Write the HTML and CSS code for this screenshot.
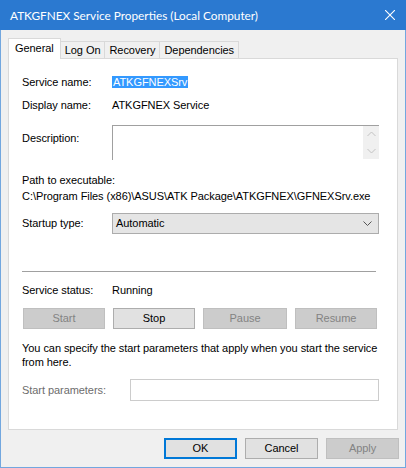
FILE: index.html
```html
<!DOCTYPE html>
<html>
<head>
<meta charset="utf-8">
<title>ATKGFNEX Service Properties</title>
<link rel="stylesheet" href="styles.css">
</head>
<body>
<div class="window">
  <div class="titlebar">
    <span class="title">ATKGFNEX Service Properties (Local Computer)</span>
    <svg class="close" width="10" height="10" viewBox="0 0 10 10"><path d="M0 0L10 10M10 0L0 10" stroke="#fff" stroke-width="1.1" fill="none"/></svg>
  </div>
  <div class="content">
    <div class="tabs">
      <div class="tab active">General</div>
      <div class="tab">Log On</div>
      <div class="tab">Recovery</div>
      <div class="tab">Dependencies</div>
    </div>
    <div class="panel">
      <div class="row r-name"><span class="label">Service name:</span><span class="sel">ATKGFNEXSrv</span></div>
      <div class="row r-display"><span class="label">Display name:</span><span>ATKGFNEX Service</span></div>
      <div class="row r-desc">
        <span class="label desc-label">Description:</span>
        <div class="textbox">
          <div class="scrollbar">
            <svg width="9" height="6" viewBox="0 0 9 6"><polyline points="0.5,5 4.5,1 8.5,5" fill="none" stroke="#c2c2c2" stroke-width="1"/></svg>
            <svg width="9" height="6" viewBox="0 0 9 6"><polyline points="0.5,1 4.5,5 8.5,1" fill="none" stroke="#c2c2c2" stroke-width="1"/></svg>
          </div>
        </div>
      </div>
      <div class="r-pathlabel">Path to executable:</div>
      <div class="r-path">C:\Program Files (x86)\ASUS\ATK Package\ATKGFNEX\GFNEXSrv.exe</div>
      <div class="row r-startup">
        <span class="label">Startup type:</span>
        <div class="combo"><span>Automatic</span>
          <svg width="9" height="5" viewBox="0 0 9 5"><polyline points="0.5,0.5 4.5,4.5 8.5,0.5" fill="none" stroke="#555" stroke-width="1"/></svg>
        </div>
      </div>
      <div class="sep"></div>
      <div class="row r-status"><span class="label">Service status:</span><span>Running</span></div>
      <div class="svc-buttons">
        <div class="btn disabled">Start</div>
        <div class="btn">Stop</div>
        <div class="btn disabled">Pause</div>
        <div class="btn disabled">Resume</div>
      </div>
      <p class="note">You can specify the start parameters that apply when you start the service from here.</p>
      <div class="row r-params">
        <span class="label params-label">Start parameters:</span>
        <div class="param-input"></div>
      </div>
    </div>
    <div class="footer">
      <div class="btn dlg default">OK</div>
      <div class="btn dlg">Cancel</div>
      <div class="btn dlg disabled">Apply</div>
    </div>
  </div>
</div>
</body>
</html>
```

FILE: styles.css
```css
html, body {
  margin: 0;
  padding: 0;
}
body {
  width: 406px;
  height: 468px;
  overflow: hidden;
  background: #f0f0f0;
  font-family: "Liberation Sans", Arial, sans-serif;
  font-size: 11px;
  letter-spacing: -0.06px;
  color: #000;
}
.window {
  box-sizing: border-box;
  width: 406px;
  height: 468px;
  border: 1px solid #72a7df;
  border-top: 0;
  display: flex;
  flex-direction: column;
}
.titlebar {
  height: 30px;
  margin: 0 -1px;
  background: #2b79d0;
  color: #fff;
  display: flex;
  align-items: center;
  padding-left: 10px;
  font-family: Lato, "Noto Sans", sans-serif;
  font-size: 11.8px;
  letter-spacing: 0;
}
.close {
  margin-left: auto;
  margin-right: 11px;
}
.content {
  padding: 8px 7px 0 7px;
}
.tabs {
  display: flex;
  align-items: flex-end;
  height: 20px;
}
.tab {
  box-sizing: border-box;
  height: 17px;
  line-height: 16px;
  padding: 0 4px;
  background: #f0f0f0;
  border-top: 1px solid #d9d9d9;
  border-right: 1px solid #d9d9d9;
}
.tab.active {
  position: relative;
  z-index: 1;
  height: 21px;
  line-height: 18px;
  margin-bottom: -1px;
  background: #fff;
  border-left: 1px solid #d9d9d9;
  padding: 0 6px;
}
.panel {
  box-sizing: border-box;
  height: 372px;
  background: #fff;
  border: 1px solid #d9d9d9;
  padding: 0 13px;
}
.row {
  display: flex;
  line-height: 13px;
}
.label {
  flex: none;
  width: 90px;
}
.r-name {
  margin-top: 17px;
  line-height: 12px;
  height: 12px;
}
.sel {
  background: #3399ff;
  color: #fff;
  padding: 0 1px;
}
.r-display {
  margin-top: 11px;
}
.r-desc {
  margin-top: 13px;
  height: 35px;
}
.desc-label {
  padding-top: 7px;
}
.textbox {
  box-sizing: border-box;
  width: 267px;
  height: 35px;
  border-top: 1px solid #a0a0a0;
  border-left: 1px solid #a0a0a0;
  display: flex;
  justify-content: flex-end;
}
.scrollbar {
  width: 16px;
  height: 33px;
  background: #f0f0f0;
  display: flex;
  flex-direction: column;
  align-items: center;
  justify-content: space-around;
}
.r-pathlabel {
  margin-top: 14px;
  line-height: 13px;
}
.r-path {
  margin-top: 3px;
  line-height: 13px;
}
.r-startup {
  margin-top: 10px;
  height: 21px;
  line-height: 21px;
}
.combo {
  box-sizing: border-box;
  width: 267px;
  height: 21px;
  line-height: 19px;
  background: #e5e5e5;
  border: 1px solid #acacac;
  padding: 0 6px 0 3px;
  display: flex;
  align-items: center;
  justify-content: space-between;
}
.sep {
  margin-top: 37px;
  width: 354px;
  height: 1px;
  background: #a0a0a0;
}
.r-status {
  margin-top: 12px;
}
.svc-buttons {
  margin-top: 11px;
  margin-left: 1px;
  display: grid;
  grid-template-columns: 82px 82px 84px 82px;
  column-gap: 8px;
}
.btn {
  box-sizing: border-box;
  height: 21px;
  line-height: 19px;
  text-align: center;
  background: #e1e1e1;
  border: 1px solid #adadad;
}
.btn.disabled {
  background: #cccccc;
  border-color: #bfbfbf;
  color: #838383;
}
.note {
  margin: 12px 0 0 0;
  width: 361px;
  line-height: 14px;
}
.r-params {
  margin-top: 10px;
  height: 22px;
  line-height: 22px;
}
.params-label {
  width: 108px;
  color: #6d6d6d;
}
.param-input {
  box-sizing: border-box;
  width: 249px;
  height: 22px;
  border: 1px solid #cccccc;
}
.footer {
  margin-top: 8px;
  margin-right: -1px;
  display: flex;
  justify-content: flex-end;
  gap: 8px;
}
.btn.dlg {
  width: 73px;
}
.btn.default {
  border: 2px solid #0078d7;
  line-height: 17px;
}
```
